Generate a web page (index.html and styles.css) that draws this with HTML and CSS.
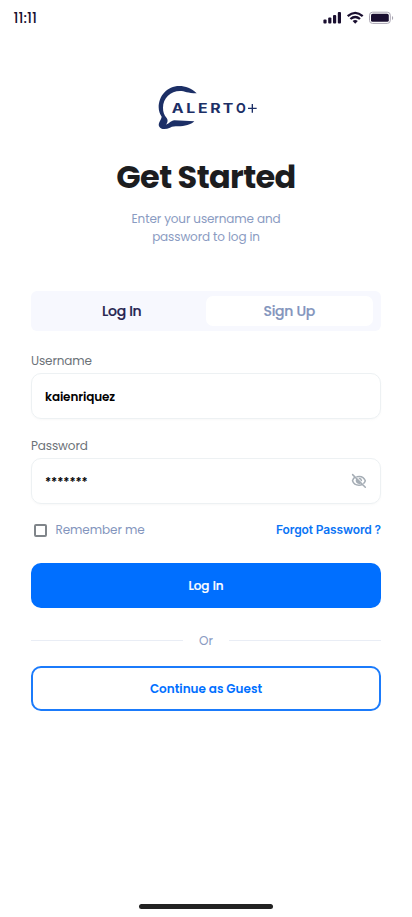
FILE: index.html
```html
<!DOCTYPE html>
<html lang="en">
<head>
<meta charset="utf-8">
<meta name="viewport" content="width=device-width, initial-scale=1">
<title>Alerto+ Log In</title>
<link rel="stylesheet" href="styles.css">
</head>
<body>
<div class="screen">
  <header class="status">
    <span class="time">11:11</span>
    <svg class="status-icons" width="72" height="14" viewBox="0 0 72 14" fill="#190e2f">
      <rect x="0.4" y="8.4" width="3.2" height="4.2" rx="1"/>
      <rect x="5.2" y="6.4" width="3.2" height="6.2" rx="1"/>
      <rect x="10" y="4" width="3.2" height="8.6" rx="1"/>
      <rect x="14.8" y="1" width="3.2" height="11.6" rx="1"/>
      <g fill="none" stroke="#190e2f" stroke-width="2.3">
        <path d="M24.7 5.2Q32.2-1.4 39.7 5.2"/>
        <path d="M27.4 8Q32.2 3.9 37 8"/>
      </g>
      <path d="M29.6 10.1Q32.2 8.1 34.8 10.1L32.2 12.8Z"/>
      <rect x="46.5" y="1.2" width="20.8" height="11.2" rx="3" fill="none" stroke="#aaa6b3"/>
      <rect x="48" y="2.8" width="17.8" height="8" rx="1.6"/>
      <path d="M69 5v4q1.2-.6 1.2-2T69 5Z" fill="#aaa6b3"/>
    </svg>
  </header>

  <svg class="logo" width="124" height="62" viewBox="0 0 372 186" fill="#1c2f66">
    <path d="M152 52C137 36 118 30 100 30C63 30 38 60 38 94C38 105 42 115 47 122C46 132 34 142 40 152C45 161 60 160 72 155C80 151 86 151 96 151C116 151 135 146 145 136L85 133C74 134 71 142 60 146C65 139 67 133 62 126C54 117 51 107 51 95C51 66 74 45 102 45C116 45 125 52 152 52Z"/>
    <text class="logo-text" transform="scale(1.25 1)" y="110" x="76 107.500 136.500 166.500 197 0">ALERT</text>
    <text class="logo-text" y="110" x="285">O</text>
    <path d="M306 97h26M319 84v26" fill="none" stroke="#1c2f66" stroke-width="4"/>
  </svg>

  <h1 class="title">Get Started</h1>
  <p class="subtitle">Enter your username and<br>password to log in</p>

  <nav class="tabs">
    <a class="tab tab-login">Log In</a>
    <a class="tab tab-signup">Sign Up</a>
  </nav>

  <label class="label">Username</label>
  <div class="field"><span class="value">kaienriquez</span></div>

  <label class="label">Password</label>
  <div class="field">
    <span class="value">*******</span>
    <svg class="eye" width="16" height="16" viewBox="0 0 16 16" fill="none" stroke="#a5adb5" stroke-width="1.5" stroke-linecap="round">
      <path d="M3.6 4.4C2.3 5.4 1.9 6.6 1.5 7.8C2.5 10.8 4.8 12.2 8 12.2C9.2 12.2 10.3 12 11.3 11.5"/>
      <path d="M6 3.7C10 2.8 13.1 4.6 14.3 7.8C14 8.8 13.5 9.6 12.8 10.3"/>
      <path d="M5.6 6.5C4.9 8.4 6.2 10.3 8.2 10.2L5.600 6.500M8.400 5.600C9.600 5.700 10.300 6.500 10.400 7.600M1.600 1.600L14.300 14.200"/>
    </svg>
  </div>

  <div class="options">
    <span class="checkbox"></span>
    <span class="remember">Remember me</span>
    <a class="forgot">Forgot Password ?</a>
  </div>

  <button class="btn primary">Log In</button>
  <div class="divider"><span>Or</span></div>
  <button class="btn outline">Continue as Guest</button>

  <div class="home-bar"></div>
</div>
</body>
</html>
```
FILE: styles.css
```css
* { box-sizing: border-box; }
body {
  margin: 0;
  background: #fff;
  font-family: Poppins, Inter, sans-serif;
}
.screen {
  display: flex;
  flex-direction: column;
  width: 412px;
  height: 917px;
  padding: 0 31px 8px;
}
.status {
  display: flex;
  justify-content: space-between;
  align-items: center;
  height: 36px;
  margin: 0 -13px 0 -17.5px;
  color: #190e2f;
}
.time { font-size: 14px; font-weight: 500; letter-spacing: 0.1px; }
.status-icons { margin-right: -1px; }
.logo { align-self: center; margin: 40px 0 0 4px; }
.logo-text {
  font-family: Inter, sans-serif;
  font-size: 38px;
  font-weight: 700;
  text-anchor: middle;
}
.title {
  margin: 15px 0 0;
  height: 48px;
  line-height: 48px;
  font-size: 32px;
  font-weight: 700;
  letter-spacing: -0.64px;
  text-align: center;
  color: #1c1d1f;
}
.subtitle {
  margin: 9px 0 0;
  font-size: 12px;
  line-height: 18px;
  letter-spacing: -0.12px;
  text-align: center;
  color: #8a9bc2;
}
.tabs {
  display: flex;
  flex: none;
  height: 40px;
  margin-top: 45px;
  padding: 5px 8px 5px 7px;
  border-radius: 6px;
  background: #f7f8fe;
}
.tab {
  flex: 1;
  height: 30px;
  border-radius: 7px;
  line-height: 31px;
  text-align: center;
  font-size: 14px;
  font-weight: 500;
  letter-spacing: -0.28px;
  -webkit-text-stroke: 0.2px currentColor;
}
.tab-login { color: #272450; }
.tab-signup { background: #fff; color: #8395bd; }
.label {
  height: 18px;
  margin: 21px 0 3px;
  font-size: 12px;
  line-height: 18px;
  letter-spacing: -0.12px;
  color: #6c7278;
}
.field {
  display: flex;
  flex: none;
  align-items: center;
  justify-content: space-between;
  height: 46px;
  padding: 0 13px;
  border: 1px solid #edf1f3;
  border-radius: 10px;
  box-shadow: 0 1px 2px rgba(228, 229, 231, 0.24);
}
.field + .label { margin-top: 18px; }
.value { padding-top: 1px; font-size: 12px; font-weight: 600; letter-spacing: -0.12px; color: #000; }
.options {
  display: flex;
  align-items: center;
  height: 20px;
  margin-top: 16px;
  padding-left: 3px;
}
.checkbox {
  width: 13px;
  height: 13px;
  border: 2px solid #80858a;
  border-radius: 2px;
}
.remember { margin-left: 8.5px; font-size: 12px; letter-spacing: -0.08px; color: #8395bd; }
.forgot {
  margin: -2px 0 0 auto;
  font-family: Inter, sans-serif;
  font-size: 12px;
  font-weight: 600;
  letter-spacing: -0.12px;
  color: #0a74f5;
}
.btn {
  flex: none;
  height: 45px;
  padding: 0;
  border: 0;
  border-radius: 10px;
  font-family: inherit;
  font-size: 12px;
}
.primary {
  margin-top: 23px;
  background: #006fff;
  color: #fff;
  font-weight: 500;
  -webkit-text-stroke: 0.2px currentColor;
}
.outline { border: 2px solid #1b7bfb; background: #fff; color: #006fff; font-weight: 600; }
.divider {
  display: flex;
  align-items: center;
  gap: 16px;
  height: 18px;
  margin: 24px 0 16px;
  font-size: 12px;
  color: #8a9bc2;
}
.divider::before, .divider::after {
  content: "";
  flex: 1;
  height: 1px;
  margin-bottom: 2px;
  background: #e9edf5;
}
.home-bar {
  flex: none;
  align-self: center;
  width: 134px;
  height: 5px;
  margin-top: auto;
  border-radius: 3px;
  background: #222;
}
```
